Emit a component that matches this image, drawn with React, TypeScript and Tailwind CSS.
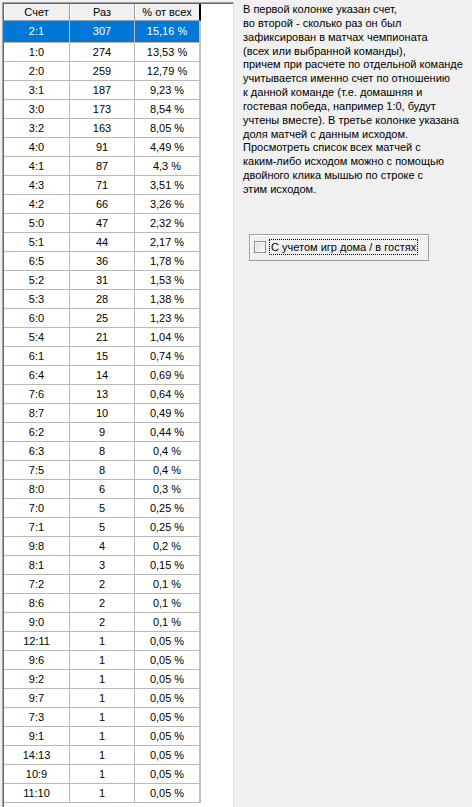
import React from "react";

const rows: [string, string, string][] = [
  ["2:1", "307", "15,16 %"],
  ["1:0", "274", "13,53 %"],
  ["2:0", "259", "12,79 %"],
  ["3:1", "187", "9,23 %"],
  ["3:0", "173", "8,54 %"],
  ["3:2", "163", "8,05 %"],
  ["4:0", "91", "4,49 %"],
  ["4:1", "87", "4,3 %"],
  ["4:3", "71", "3,51 %"],
  ["4:2", "66", "3,26 %"],
  ["5:0", "47", "2,32 %"],
  ["5:1", "44", "2,17 %"],
  ["6:5", "36", "1,78 %"],
  ["5:2", "31", "1,53 %"],
  ["5:3", "28", "1,38 %"],
  ["6:0", "25", "1,23 %"],
  ["5:4", "21", "1,04 %"],
  ["6:1", "15", "0,74 %"],
  ["6:4", "14", "0,69 %"],
  ["7:6", "13", "0,64 %"],
  ["8:7", "10", "0,49 %"],
  ["6:2", "9", "0,44 %"],
  ["6:3", "8", "0,4 %"],
  ["7:5", "8", "0,4 %"],
  ["8:0", "6", "0,3 %"],
  ["7:0", "5", "0,25 %"],
  ["7:1", "5", "0,25 %"],
  ["9:8", "4", "0,2 %"],
  ["8:1", "3", "0,15 %"],
  ["7:2", "2", "0,1 %"],
  ["8:6", "2", "0,1 %"],
  ["9:0", "2", "0,1 %"],
  ["12:11", "1", "0,05 %"],
  ["9:6", "1", "0,05 %"],
  ["9:2", "1", "0,05 %"],
  ["9:7", "1", "0,05 %"],
  ["7:3", "1", "0,05 %"],
  ["9:1", "1", "0,05 %"],
  ["14:13", "1", "0,05 %"],
  ["10:9", "1", "0,05 %"],
  ["11:10", "1", "0,05 %"],
];

const helpLines = [
  "В первой колонке указан счет,",
  "во второй - сколько раз он был",
  "зафиксирован в матчах чемпионата",
  "(всех или выбранной команды),",
  "причем при расчете по отдельной команде",
  "учитывается именно счет по отношению",
  "к данной команде (т.е. домашняя и",
  "гостевая победа, например 1:0, будут",
  "учтены вместе). В третье колонке указана",
  "доля матчей с данным исходом.",
  "Просмотреть список всех матчей с",
  "каким-либо исходом можно с помощью",
  "двойного клика мышью по строке с",
  "этим исходом.",
];

export default function App() {
  return (
    <div className="flex h-[807px] w-[472px] overflow-hidden bg-[#f0f0f0] font-['Liberation_Sans',Arial,sans-serif] text-[11px] text-black">
      {/* grid */}
      <div className="h-full w-[234px] pl-[2px] pt-[2px]">
        <div className="h-full border-l border-t border-r border-[#a0a0a0] border-r-[#e3e3e3]">
          <div className="h-full border-l border-t border-[#696969] bg-white">
            <div className="flex h-[17px] w-[197px]">
              <div className="flex w-[66px] items-center justify-center border-b border-r border-[#a0a0a0] bg-[#f0f0f0] shadow-[inset_1px_0_0_#fff]">
                Счет
              </div>
              <div className="flex w-[65px] items-center justify-center border-b border-r border-[#a0a0a0] bg-[#f0f0f0] shadow-[inset_1px_0_0_#fff]">
                Раз
              </div>
              <div className="flex w-[66px] items-center justify-center border-b border-[#a0a0a0] border-r-2 border-r-black bg-[#f0f0f0] shadow-[inset_1px_0_0_#fff]">
                % от всех
              </div>
            </div>
            {rows.map(([score, count, pct], i) => {
              const selected = i === 0;
              return (
                <div
                  key={score}
                  className={`flex w-[197px] border-b border-[#b9b9b9] ${
                    selected ? "h-[22px] bg-[#0078d7] text-white" : "h-[19px]"
                  }`}
                >
                  <div className="flex w-[66px] items-center justify-center border-r border-[#b9b9b9]">
                    {score}
                  </div>
                  <div className="flex w-[65px] items-center justify-center border-r border-[#b9b9b9]">
                    {count}
                  </div>
                  <div className="flex w-[66px] items-center justify-center border-r-2 border-[#c0c0c0]">
                    {pct}
                  </div>
                </div>
              );
            })}
          </div>
        </div>
      </div>

      {/* help panel */}
      <div className="flex-1 pl-[9px] pt-[3px]">
        <div className="leading-[13.85px] text-black">
          {helpLines.map((l) => (
            <div key={l} className="whitespace-nowrap">
              {l}
            </div>
          ))}
        </div>
        <div className="ml-[6px] mt-[37px] flex h-[27px] w-[180px] items-center border border-[#a0a0a0] pl-[4px] shadow-[inset_1px_1px_0_#fff]">
          <span className="h-[12px] w-[12px] border border-[#8e8f8f] bg-gradient-to-br from-[#dcdcdc] to-white shadow-[inset_0_0_0_1px_#f4f4f4]" />
          <span className="ml-[3px] border border-dotted border-black px-[1px] leading-[14px] whitespace-nowrap">
            С учетом игр дома / в гостях
          </span>
        </div>
      </div>
    </div>
  );
}
